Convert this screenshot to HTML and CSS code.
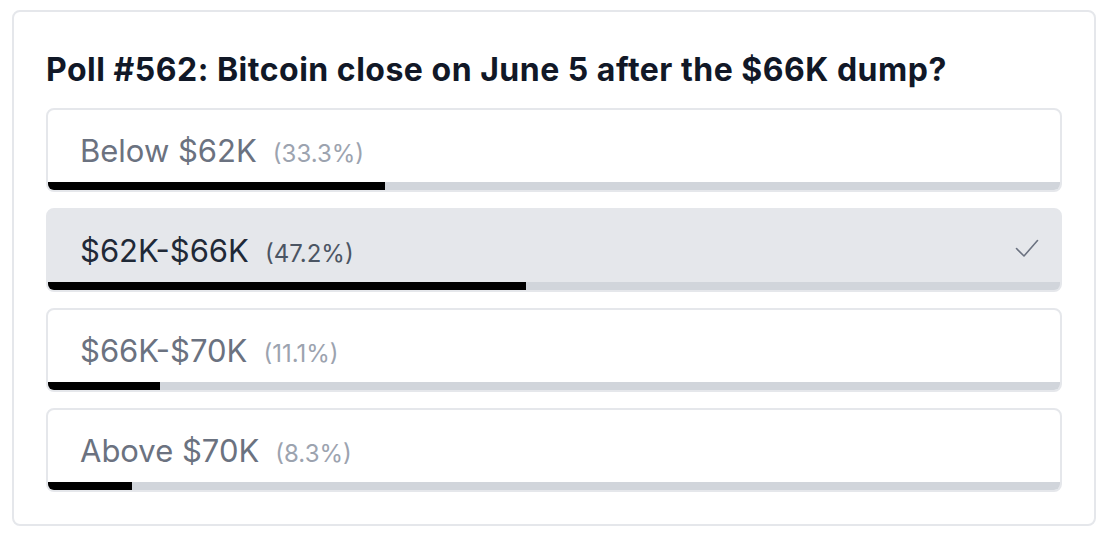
FILE: index.html
```html
<!DOCTYPE html>
<html lang="en">
<head>
  <meta charset="UTF-8">
  <title>Poll #562</title>
  <meta name="viewport" content="width=device-width, initial-scale=1">
  <link rel="stylesheet" href="styles.css">
</head>
<body>
  <div class="card">
    <h2 class="poll-title">Poll #562: Bitcoin close on June 5 after the $66K dump?</h2>

    <div class="options">
      <div class="option">
        <div class="option-row">
          <span class="label">Below $62K</span>
          <span class="pct">(33.3%)</span>
        </div>
        <div class="bar"><div class="fill" style="width: 33.3%;"></div></div>
      </div>

      <div class="option selected">
        <div class="option-row">
          <span class="label">$62K-$66K</span>
          <span class="pct">(47.2%)</span>
          <svg class="check" width="24" height="20" viewBox="0 0 24 20">
            <path d="M1.5 9.5 L9 17 L22.5 1.5" fill="none" stroke="#6b7280" stroke-width="1.6" stroke-linecap="round" stroke-linejoin="round"/>
          </svg>
        </div>
        <div class="bar"><div class="fill" style="width: 47.2%;"></div></div>
      </div>

      <div class="option">
        <div class="option-row">
          <span class="label">$66K-$70K</span>
          <span class="pct">(11.1%)</span>
        </div>
        <div class="bar"><div class="fill" style="width: 11.1%;"></div></div>
      </div>

      <div class="option">
        <div class="option-row">
          <span class="label">Above $70K</span>
          <span class="pct">(8.3%)</span>
        </div>
        <div class="bar"><div class="fill" style="width: 8.3%;"></div></div>
      </div>
    </div>
  </div>
</body>
</html>
```

FILE: styles.css
```css
body {
  margin: 10px 12px;
  font-family: Inter, "Liberation Sans", Arial, sans-serif;
  background: #fff;
}
.card {
  border: 2px solid #e5e7eb;
  border-radius: 8px;
  padding: 40px 32px 32px;
}
.poll-title {
  margin: 0 0 20px;
  font-size: 32px;
  line-height: 36px;
  letter-spacing: 0.5px;
  font-weight: 700;
  color: #111827;
}
.options {
  display: flex;
  flex-direction: column;
  gap: 16px;
}
.option {
  border: 2px solid #e5e7eb;
  border-radius: 8px;
  overflow: hidden;
  background: #fff;
}
.option.selected { background: #e5e7eb; }
.option-row {
  display: flex;
  align-items: baseline;
  height: 38px;
  padding: 22px 21px 12px 32px;
}
.label {
  font-size: 31px;
  line-height: 38px;
  color: #6b7280;
}
.pct {
  margin-left: 16px;
  font-size: 24px;
  color: #9ca3af;
}
.selected .label { color: #1f2937; }
.selected .pct { color: #4b5563; }
.check {
  margin-left: auto;
  align-self: center;
  position: relative;
  top: -2px;
}
.bar {
  height: 8px;
  background: #d1d5db;
}
.fill {
  height: 100%;
  background: #000;
}
```
